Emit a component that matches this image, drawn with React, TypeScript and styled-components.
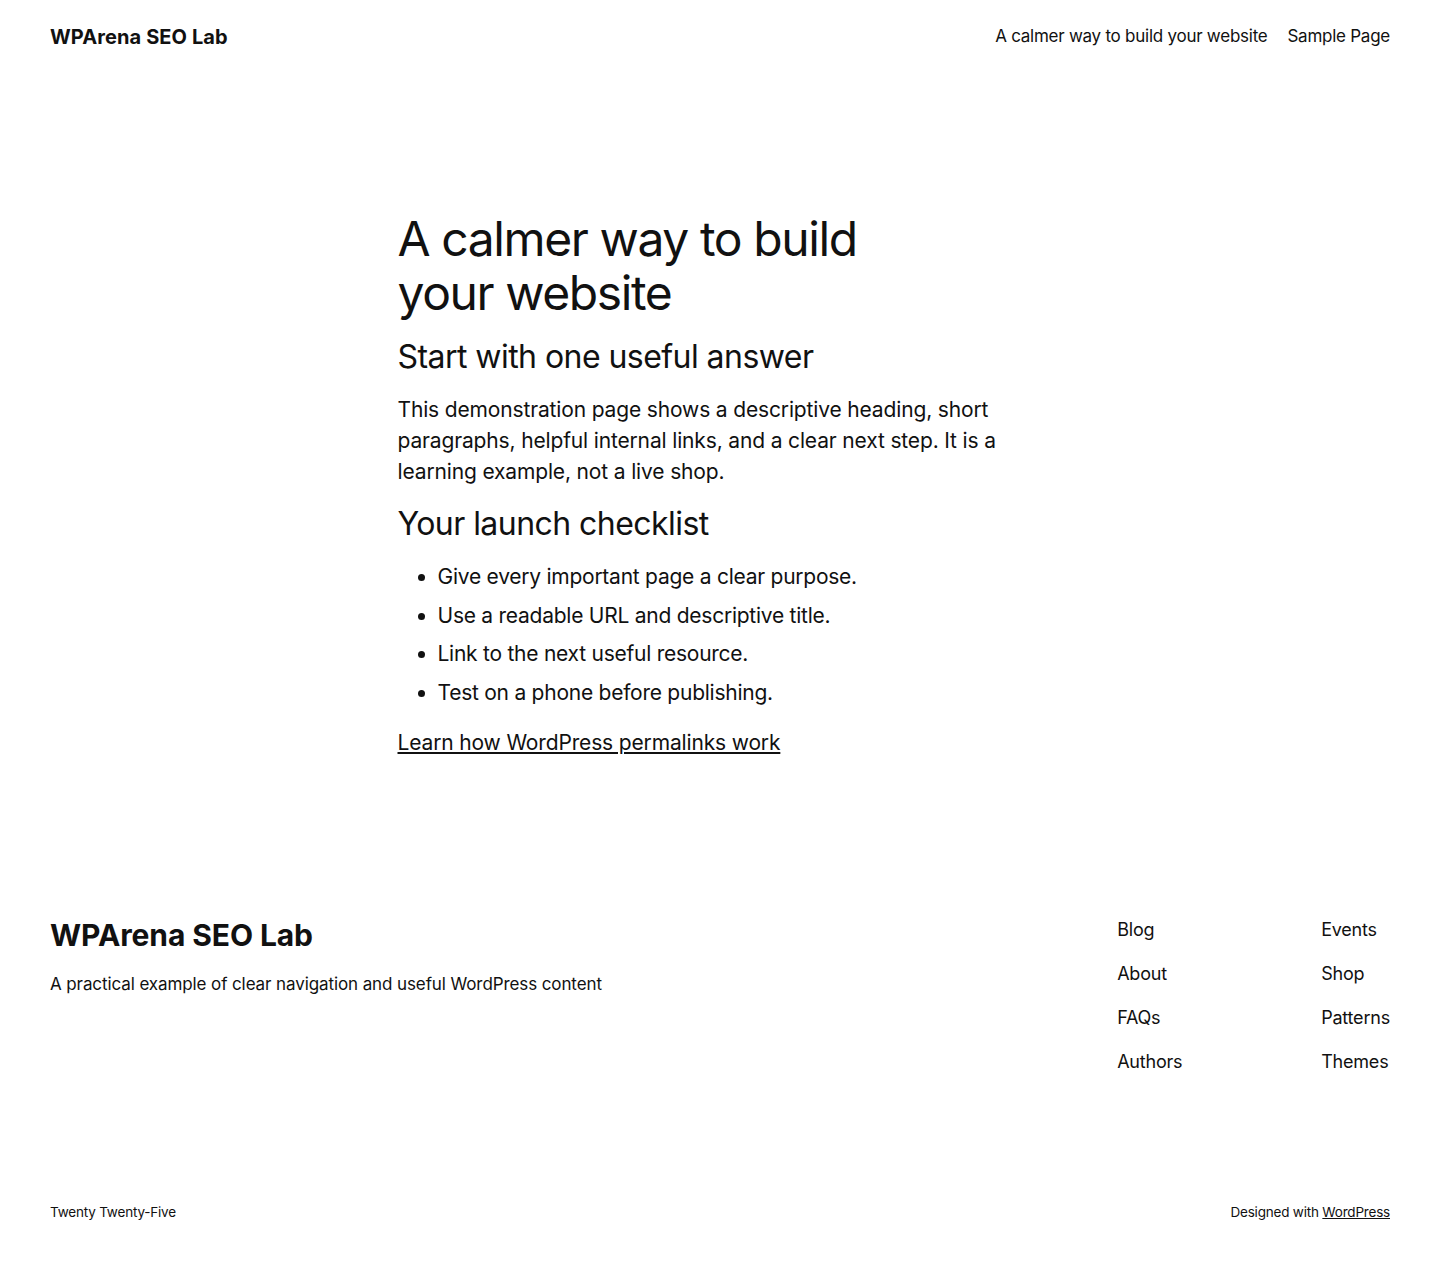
import React from "react";
import styled, { createGlobalStyle } from "styled-components";

const GlobalStyle = createGlobalStyle`
  body {
    margin: 0;
    background: #fff;
    color: #111111;
    font-family: Inter, "Noto Sans", sans-serif;
    -webkit-font-smoothing: antialiased;
  }
  a {
    color: inherit;
  }
`;

const Page = styled.div`
  min-height: 1272px;
  display: flex;
  flex-direction: column;
`;

const Header = styled.header`
  display: flex;
  align-items: center;
  justify-content: space-between;
  padding: 23px 50px;
`;

const SiteTitle = styled.a<{ $big?: boolean }>`
  font-size: ${(p) => (p.$big ? "30px" : "20px")};
  font-weight: 700;
  letter-spacing: ${(p) => (p.$big ? "-0.1px" : "0.1px")};
  line-height: ${(p) => (p.$big ? "36px" : "28px")};
  text-decoration: none;
`;

const TopNav = styled.nav`
  display: flex;
  gap: 20px;
`;

const NavLink = styled.a`
  font-size: 17px;
  letter-spacing: -0.25px;
  line-height: 1.4;
  text-decoration: none;
`;

const Main = styled.main`
  width: 645px;
  margin: 0 auto;
  padding: 138px 0 0;
  display: flex;
  flex-direction: column;
  gap: 19px;
`;

const Title = styled.h1`
  margin: 0;
  font-size: 48px;
  font-weight: 400;
  line-height: 1.125;
  letter-spacing: -1.4px;
  max-width: 480px;
`;

const SubTitle = styled.h2`
  margin: 0;
  font-size: 32px;
  font-weight: 400;
  line-height: 1.125;
  letter-spacing: -0.55px;
`;

const Text = styled.p`
  margin: 0;
  font-size: 21px;
  line-height: 31px;
  letter-spacing: -0.15px;
`;

const Checklist = styled.ul`
  margin: 0;
  padding-left: 40px;
  font-size: 21px;
  line-height: 31px;
  letter-spacing: -0.25px;
`;

const Item = styled.li`
  & + & {
    margin-top: 7.7px;
  }
`;

const Footer = styled.footer`
  margin-top: auto;
  padding: 0 50px 50px;
`;

const FooterTop = styled.div`
  display: flex;
  justify-content: space-between;
  align-items: flex-start;
  padding-top: 154px;
`;

const Brand = styled.div`
  display: flex;
  flex-direction: column;
  gap: 19px;
`;

const Tagline = styled.p`
  margin: 0;
  font-size: 17px;
  line-height: 24px;
  letter-spacing: -0.1px;
`;

const FooterNav = styled.nav`
  display: grid;
  grid-template-columns: 204px auto;
  row-gap: 19px;
`;

const FooterLink = styled.a`
  font-size: 18px;
  line-height: 25px;
  letter-spacing: -0.2px;
  text-decoration: none;
`;

const FooterBottom = styled.div`
  display: flex;
  justify-content: space-between;
  align-items: center;
  margin-top: 128px;
  font-size: 13.5px;
  line-height: 20px;
  letter-spacing: -0.2px;
`;

const footerLinks = [
  "Blog",
  "Events",
  "About",
  "Shop",
  "FAQs",
  "Patterns",
  "Authors",
  "Themes",
];

const checklist = [
  "Give every important page a clear purpose.",
  "Use a readable URL and descriptive title.",
  "Link to the next useful resource.",
  "Test on a phone before publishing.",
];

const App = () => {
  return (
    <Page>
      <GlobalStyle />
      <Header>
        <SiteTitle href="#">WPArena SEO Lab</SiteTitle>
        <TopNav>
          <NavLink href="#">A calmer way to build your website</NavLink>
          <NavLink href="#">Sample Page</NavLink>
        </TopNav>
      </Header>

      <Main>
        <Title>A calmer way to build your website</Title>
        <SubTitle>Start with one useful answer</SubTitle>
        <Text>
          This demonstration page shows a descriptive heading, short
          paragraphs, helpful internal links, and a clear next step. It is a
          learning example, not a live shop.
        </Text>
        <SubTitle>Your launch checklist</SubTitle>
        <Checklist>
          {checklist.map((item) => (
            <Item key={item}>{item}</Item>
          ))}
        </Checklist>
        <Text>
          <a href="#">Learn how WordPress permalinks work</a>
        </Text>
      </Main>

      <Footer>
        <FooterTop>
          <Brand>
            <SiteTitle href="#" $big>
              WPArena SEO Lab
            </SiteTitle>
            <Tagline>
              A practical example of clear navigation and useful WordPress
              content
            </Tagline>
          </Brand>
          <FooterNav>
            {footerLinks.map((label) => (
              <FooterLink key={label} href="#">
                {label}
              </FooterLink>
            ))}
          </FooterNav>
        </FooterTop>
        <FooterBottom>
          <span>Twenty Twenty-Five</span>
          <span>
            Designed with <a href="#">WordPress</a>
          </span>
        </FooterBottom>
      </Footer>
    </Page>
  );
};

export default App;
